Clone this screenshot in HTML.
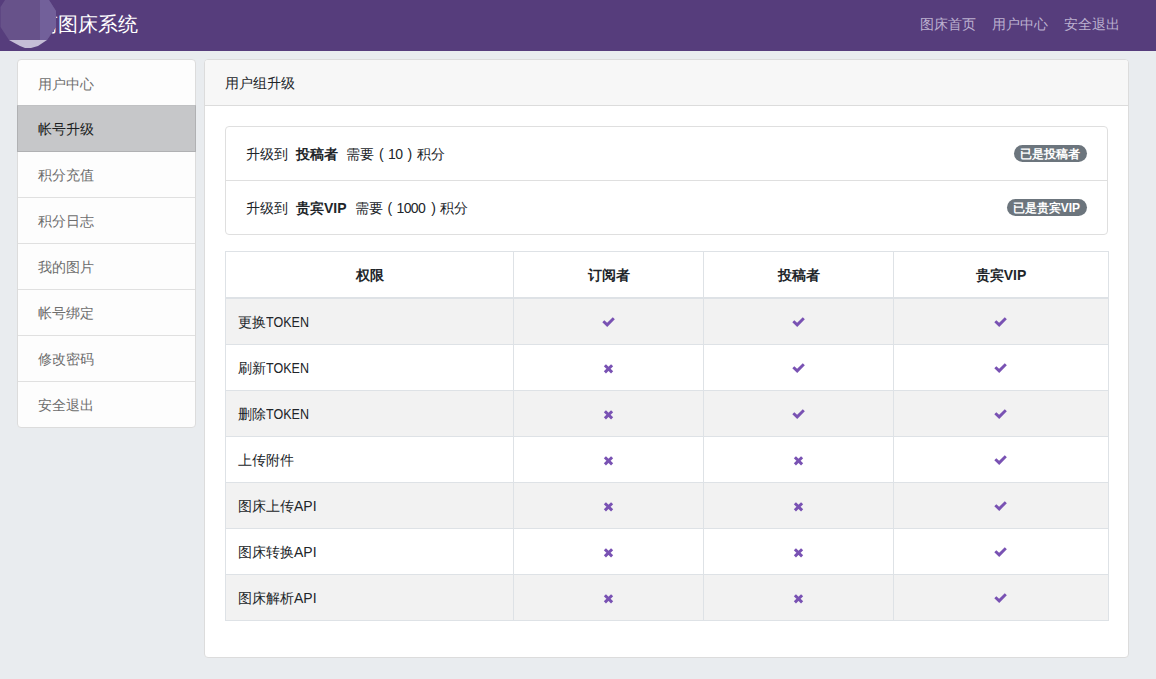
<!DOCTYPE html>
<html><head><meta charset="utf-8">
<style>
*{box-sizing:border-box;margin:0;padding:0}
html,body{width:1156px;height:679px;overflow:hidden}
body{background:#e9ecef;font-family:"Liberation Sans",sans-serif;font-size:14px;line-height:21px;color:#212529;position:relative}
.hdr{position:absolute;left:0;top:0;width:1156px;height:51px;background:#563d7c;overflow:hidden}
.title{position:absolute;left:38px;top:11px;font-size:20px;line-height:26px;color:#fff;white-space:nowrap}
.nav{position:absolute;top:14px;font-size:14px;line-height:21px;color:#bcb1d0;white-space:nowrap}
.side{position:absolute;left:17px;top:59px;width:179px;height:369px;background:#fdfdfd;border:1px solid #dcdcdc;border-radius:4px;overflow:hidden}
.si{position:absolute;left:0;width:177px;height:46px;border-top:1px solid #e0e0e0;padding-left:20px;padding-top:1px;line-height:45px;color:#6d6d6d}
.si.first{border-top:none;padding-top:2px}
.act2{position:absolute;left:17px;top:105px;width:179px;height:47px;background:#c6c7c9;color:#1b1e21;border:1px solid #b0b1b3;border-top-color:#c0c1c3;padding-left:20px;padding-top:1px;line-height:45px}
.card{position:absolute;left:204px;top:59px;width:925px;height:599px;background:#fff;border:1px solid #dcdcdc;border-radius:4px;overflow:hidden}
.ch{position:absolute;left:0;top:0;width:923px;height:46px;background:#f7f7f7;border-bottom:1px solid #dcdcdc;padding-left:20px;padding-top:1px;line-height:45px}
.lg{position:absolute;left:20px;top:66px;width:883px;height:109px;border:1px solid #dfdfdf;border-radius:4px}
.li{position:absolute;left:0;width:881px;height:54px}
.sg{position:absolute;top:17px;white-space:nowrap}
b{font-weight:bold}
.badge{position:absolute;right:20px;height:17px;border-radius:9px;background:#6c757d;color:#fff;font-size:12px;font-weight:bold;line-height:17px;padding:1px 7px 0 6px;white-space:nowrap}
table{position:absolute;left:20px;top:191px;width:883px;border-collapse:collapse;table-layout:fixed}
td,th{border:1px solid #dee2e6;height:46px;padding:2px 12px 0;vertical-align:middle}
th{height:46px;border-bottom:2px solid #dee2e6;font-weight:bold;text-align:center}
tr.s td{background:#f2f2f2}
tr:nth-child(2) td{height:47px;padding-top:3px}
td.c{text-align:center;padding:2px 0 0}
.ic{display:block;margin:0 auto}
.tk{display:inline-block;transform:scaleX(0.895);transform-origin:0 50%}
</style></head><body>
<div class="hdr">
  <div class="title">简图床系统</div>
  <svg width="60" height="50" viewBox="0 0 60 50" style="position:absolute;left:0;top:0">
  <defs><clipPath id="cp"><polygon points="5,0 49,0 56,11 56,27 47,40 38,46 31,48 25,48 20,46 9,40 0.5,27 0.5,7"/></clipPath></defs>
  <g clip-path="url(#cp)"><rect x="0" y="0" width="60" height="40" fill="#67528a"/><rect x="40" y="0" width="20" height="40" fill="#72609a"/><rect x="0" y="40" width="60" height="10" fill="#c5bed6"/></g></svg>
  <div class="nav" style="left:920px">图床首页</div>
  <div class="nav" style="left:992px">用户中心</div>
  <div class="nav" style="left:1064px">安全退出</div>
</div>
<div class="side">
  <div class="si first" style="top:0">用户中心</div>
  
  <div class="si" style="top:91px">积分充值</div>
  <div class="si" style="top:137px">积分日志</div>
  <div class="si" style="top:183px">我的图片</div>
  <div class="si" style="top:229px">帐号绑定</div>
  <div class="si" style="top:275px">修改密码</div>
  <div class="si" style="top:321px">安全退出</div>
</div>
<div class="act2">帐号升级</div>
<div class="card">
  <div class="ch">用户组升级</div>
  <div class="lg">
    <div class="li" style="top:0"><span class="sg" style="left:20px;">升级到</span><span class="sg" style="left:70px;"><b>投稿者</b></span><span class="sg" style="left:120px;">需要</span><span class="sg" style="left:153px;">(</span><span class="sg" style="left:162px;letter-spacing:-0.6px">10</span><span class="sg" style="left:181.5px;">)</span><span class="sg" style="left:191px;">积分</span><span class="badge" style="top:18px">已是投稿者</span></div>
    <div class="li" style="top:53px;border-top:1px solid #dfdfdf;height:55px"><span class="sg" style="left:20px;">升级到</span><span class="sg" style="left:70px;"><b>贵宾VIP</b></span><span class="sg" style="left:129px;">需要</span><span class="sg" style="left:161.5px;">(</span><span class="sg" style="left:170.5px;letter-spacing:-0.6px">1000</span><span class="sg" style="left:205.2px;">)</span><span class="sg" style="left:214px;">积分</span><span class="badge" style="top:18px">已是贵宾VIP</span></div>
  </div>
  <table>
    <colgroup><col style="width:288px"><col style="width:190px"><col style="width:190px"><col style="width:215px"></colgroup>
    <tr><th>权限</th><th>订阅者</th><th>投稿者</th><th>贵宾VIP</th></tr>
<tr class="s"><td><span class="lbl">更换<span class="tk">TOKEN</span></span></td><td class="c"><svg class="ic" width="14" height="10" viewBox="0 0 14 10" overflow="visible"><path d="M1.3 3.2 L5.2 6.9 L11.8 0.3" fill="none" stroke="#7952b3" stroke-width="2.9"/></svg></td><td class="c"><svg class="ic" width="14" height="10" viewBox="0 0 14 10" overflow="visible"><path d="M1.3 3.2 L5.2 6.9 L11.8 0.3" fill="none" stroke="#7952b3" stroke-width="2.9"/></svg></td><td class="c"><svg class="ic" width="14" height="10" viewBox="0 0 14 10" overflow="visible"><path d="M1.3 3.2 L5.2 6.9 L11.8 0.3" fill="none" stroke="#7952b3" stroke-width="2.9"/></svg></td></tr>
<tr><td><span class="lbl">刷新<span class="tk">TOKEN</span></span></td><td class="c"><svg class="ic" width="10" height="10" viewBox="0 0 10 10" overflow="visible"><path d="M0.9 1.2 L8.1 8.4 M8.1 1.2 L0.9 8.4" fill="none" stroke="#7952b3" stroke-width="3"/></svg></td><td class="c"><svg class="ic" width="14" height="10" viewBox="0 0 14 10" overflow="visible"><path d="M1.3 3.2 L5.2 6.9 L11.8 0.3" fill="none" stroke="#7952b3" stroke-width="2.9"/></svg></td><td class="c"><svg class="ic" width="14" height="10" viewBox="0 0 14 10" overflow="visible"><path d="M1.3 3.2 L5.2 6.9 L11.8 0.3" fill="none" stroke="#7952b3" stroke-width="2.9"/></svg></td></tr>
<tr class="s"><td><span class="lbl">删除<span class="tk">TOKEN</span></span></td><td class="c"><svg class="ic" width="10" height="10" viewBox="0 0 10 10" overflow="visible"><path d="M0.9 1.2 L8.1 8.4 M8.1 1.2 L0.9 8.4" fill="none" stroke="#7952b3" stroke-width="3"/></svg></td><td class="c"><svg class="ic" width="14" height="10" viewBox="0 0 14 10" overflow="visible"><path d="M1.3 3.2 L5.2 6.9 L11.8 0.3" fill="none" stroke="#7952b3" stroke-width="2.9"/></svg></td><td class="c"><svg class="ic" width="14" height="10" viewBox="0 0 14 10" overflow="visible"><path d="M1.3 3.2 L5.2 6.9 L11.8 0.3" fill="none" stroke="#7952b3" stroke-width="2.9"/></svg></td></tr>
<tr><td><span class="lbl">上传附件</span></td><td class="c"><svg class="ic" width="10" height="10" viewBox="0 0 10 10" overflow="visible"><path d="M0.9 1.2 L8.1 8.4 M8.1 1.2 L0.9 8.4" fill="none" stroke="#7952b3" stroke-width="3"/></svg></td><td class="c"><svg class="ic" width="10" height="10" viewBox="0 0 10 10" overflow="visible"><path d="M0.9 1.2 L8.1 8.4 M8.1 1.2 L0.9 8.4" fill="none" stroke="#7952b3" stroke-width="3"/></svg></td><td class="c"><svg class="ic" width="14" height="10" viewBox="0 0 14 10" overflow="visible"><path d="M1.3 3.2 L5.2 6.9 L11.8 0.3" fill="none" stroke="#7952b3" stroke-width="2.9"/></svg></td></tr>
<tr class="s"><td><span class="lbl">图床上传API</span></td><td class="c"><svg class="ic" width="10" height="10" viewBox="0 0 10 10" overflow="visible"><path d="M0.9 1.2 L8.1 8.4 M8.1 1.2 L0.9 8.4" fill="none" stroke="#7952b3" stroke-width="3"/></svg></td><td class="c"><svg class="ic" width="10" height="10" viewBox="0 0 10 10" overflow="visible"><path d="M0.9 1.2 L8.1 8.4 M8.1 1.2 L0.9 8.4" fill="none" stroke="#7952b3" stroke-width="3"/></svg></td><td class="c"><svg class="ic" width="14" height="10" viewBox="0 0 14 10" overflow="visible"><path d="M1.3 3.2 L5.2 6.9 L11.8 0.3" fill="none" stroke="#7952b3" stroke-width="2.9"/></svg></td></tr>
<tr><td><span class="lbl">图床转换API</span></td><td class="c"><svg class="ic" width="10" height="10" viewBox="0 0 10 10" overflow="visible"><path d="M0.9 1.2 L8.1 8.4 M8.1 1.2 L0.9 8.4" fill="none" stroke="#7952b3" stroke-width="3"/></svg></td><td class="c"><svg class="ic" width="10" height="10" viewBox="0 0 10 10" overflow="visible"><path d="M0.9 1.2 L8.1 8.4 M8.1 1.2 L0.9 8.4" fill="none" stroke="#7952b3" stroke-width="3"/></svg></td><td class="c"><svg class="ic" width="14" height="10" viewBox="0 0 14 10" overflow="visible"><path d="M1.3 3.2 L5.2 6.9 L11.8 0.3" fill="none" stroke="#7952b3" stroke-width="2.9"/></svg></td></tr>
<tr class="s"><td><span class="lbl">图床解析API</span></td><td class="c"><svg class="ic" width="10" height="10" viewBox="0 0 10 10" overflow="visible"><path d="M0.9 1.2 L8.1 8.4 M8.1 1.2 L0.9 8.4" fill="none" stroke="#7952b3" stroke-width="3"/></svg></td><td class="c"><svg class="ic" width="10" height="10" viewBox="0 0 10 10" overflow="visible"><path d="M0.9 1.2 L8.1 8.4 M8.1 1.2 L0.9 8.4" fill="none" stroke="#7952b3" stroke-width="3"/></svg></td><td class="c"><svg class="ic" width="14" height="10" viewBox="0 0 14 10" overflow="visible"><path d="M1.3 3.2 L5.2 6.9 L11.8 0.3" fill="none" stroke="#7952b3" stroke-width="2.9"/></svg></td></tr>
  </table>
</div>
</body></html>
